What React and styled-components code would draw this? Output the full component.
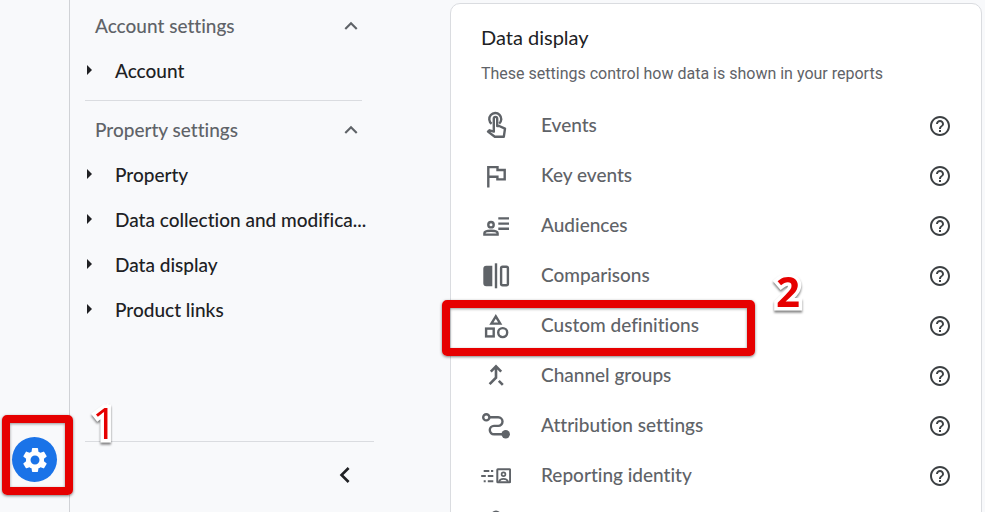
import { useState } from "react";
import styled, { createGlobalStyle } from "styled-components";
import {
  MdSettings,
  MdHelpOutline,
  MdExpandLess,
  MdExpandMore,
  MdArrowRight,
  MdChevronLeft,
} from "react-icons/md";

const SECTIONS = [
  { title: "Account settings", items: ["Account"] },
  {
    title: "Property settings",
    items: [
      "Property",
      "Data collection and modifica...",
      "Data display",
      "Product links",
    ],
  },
];

const SETTINGS = [
  { label: "Events", icon: TapIcon },
  { label: "Key events", icon: FlagIcon },
  { label: "Audiences", icon: AudienceIcon },
  { label: "Comparisons", icon: CompareIcon },
  { label: "Custom definitions", icon: ShapesIcon, step: 2 },
  { label: "Channel groups", icon: MergeIcon },
  { label: "Attribution settings", icon: PathIcon },
  { label: "Reporting identity", icon: IdentityIcon },
];

function Icon({ children }) {
  return (
    <svg
      width="30"
      height="30"
      viewBox="0 0 30 30"
      fill="none"
      stroke="currentColor"
      strokeWidth="2.4"
      aria-hidden="true"
    >
      {children}
    </svg>
  );
}

function TapIcon() {
  return (
    <Icon>
      <path d="M10.6 13.8A6 6 0 1 1 18.2 13.6" />
      <path
        d="M12.8 21.6V8.6a1.7 1.7 0 0 1 3.4 0V16h2l5.8 2.6-1.2 8.2h-9L7 21.6l1.6-1.3z"
        strokeLinejoin="round"
      />
    </Icon>
  );
}

function FlagIcon() {
  return (
    <Icon>
      <path d="M7.3 27.4V7.1h9.2V10h7.2v9.4h-7.3v-2.6H7.3" />
    </Icon>
  );
}

function AudienceIcon() {
  return (
    <Icon>
      <circle cx="10" cy="14.7" r="2.7" />
      <path d="M3.4 24.6v-1.4c0-3.2 13.2-3.2 13.2 0v1.4z" />
      <path d="M17.3 8.4H28M17.3 13.6H28M17.3 18.8H28" />
    </Icon>
  );
}

function CompareIcon() {
  return (
    <Icon>
      <path
        d="M11.3 5.7v20.6h-6a3 3 0 0 1-3-3V8.7a3 3 0 0 1 3-3z"
        fill="currentColor"
        stroke="none"
      />
      <path d="M15 3.3v25" />
      <rect x="20.1" y="6.8" width="6.8" height="18.4" rx="1.5" />
    </Icon>
  );
}

function ShapesIcon() {
  return (
    <Icon>
      <path d="M14.8 6.4l-4.4 7.2h8.8z" />
      <rect x="5.1" y="18.6" width="7.6" height="7.8" />
      <circle cx="21.7" cy="22.6" r="4.5" />
    </Icon>
  );
}

function MergeIcon() {
  return (
    <Icon>
      <path
        d="M9.8 11.6L15 6.4l5.2 5.2M15 7v10.6l-6.4 6.6M17.8 20.8l4 4"
        strokeWidth="2.6"
      />
    </Icon>
  );
}

function PathIcon() {
  return (
    <Icon>
      <circle cx="5.3" cy="7.3" r="3.1" />
      <path d="M8.5 7.3H17.2a4.3 4.3 0 0 1 0 8.6H13a4.2 4.2 0 0 0 0 8.4H23" />
      <circle cx="24.7" cy="24.3" r="4.2" fill="currentColor" stroke="none" />
    </Icon>
  );
}

function IdentityIcon() {
  return (
    <Icon>
      <rect x="16.3" y="9.3" width="12.8" height="13" rx="0.5" strokeWidth="2" />
      <circle cx="22.5" cy="14.2" r="1.9" strokeWidth="1.7" />
      <path d="M18 21.8c1-4 8-4 9 0" strokeWidth="1.8" />
      <path
        d="M2.7 11h5.6M10 11h2.2M.2 16h4.6M6.8 16h5.5M2.7 21.2h2M6.8 21.2h5.5"
        strokeWidth="2"
      />
    </Icon>
  );
}

function PersonIcon() {
  return (
    <Icon>
      <circle cx="15" cy="5.6" r="4" />
    </Icon>
  );
}

function NavSection({ title, items }) {
  const [open, setOpen] = useState(true);
  return (
    <Section>
      <SectionToggle
        type="button"
        aria-expanded={open}
        onClick={() => setOpen(!open)}
      >
        {title}
        {open ? <MdExpandLess size={26} /> : <MdExpandMore size={26} />}
      </SectionToggle>
      {open &&
        items.map((item) => (
          <NavItem key={item} type="button">
            <MdArrowRight size={24} />
            <span>{item}</span>
          </NavItem>
        ))}
    </Section>
  );
}

export default function App() {
  return (
    <>
      <GlobalStyle />
      <Page>
        <Rail>
          <AdminLink href="#admin" aria-label="Admin">
            <MdSettings size={30} />
          </AdminLink>
          <RailMarker />
          <RailNumber>1</RailNumber>
        </Rail>
        <Sidebar>
          <Sections>
            {SECTIONS.map((section) => (
              <NavSection key={section.title} {...section} />
            ))}
          </Sections>
          <SidebarFooter>
            <CollapseButton type="button" aria-label="Collapse">
              <MdChevronLeft size={32} />
            </CollapseButton>
          </SidebarFooter>
        </Sidebar>
        <Main>
          <Card>
            <CardTitle>Data display</CardTitle>
            <CardText>
              These settings control how data is shown in your reports
            </CardText>
            <SettingList>
              {SETTINGS.map(({ label, icon: SettingIcon, step }) => (
                <SettingRow key={label}>
                  <SettingLink href="#setting">
                    <SettingIcon />
                    <SettingLabel>{label}</SettingLabel>
                  </SettingLink>
                  <HelpButton type="button" aria-label={`Help: ${label}`}>
                    <MdHelpOutline size={24} />
                  </HelpButton>
                  {step && (
                    <>
                      <RowMarker />
                      <RowNumber>{step}</RowNumber>
                    </>
                  )}
                </SettingRow>
              ))}
              <SettingRow>
                <PersonIcon />
              </SettingRow>
            </SettingList>
          </Card>
        </Main>
      </Page>
    </>
  );
}

const GlobalStyle = createGlobalStyle`
  * {
    box-sizing: border-box;
  }
  body {
    margin: 0;
    background: #f8f9fb;
    color: #202124;
    font-family: "Lato", "Liberation Sans", sans-serif;
    font-size: 19px;
    font-weight: 500;
    font-variant-ligatures: none;
  }
  button {
    border: 0;
    padding: 0;
    background: none;
    color: inherit;
    font: inherit;
    font-variant-ligatures: none;
    cursor: pointer;
  }
`;

const Page = styled.div`
  display: flex;
  height: 100vh;
  overflow: hidden;
`;

const Rail = styled.div`
  position: relative;
  flex: none;
  display: flex;
  flex-direction: column;
  justify-content: flex-end;
  width: 70px;
  padding: 0 12px 30px;
  border-right: 1px solid #d0d2d6;
`;

const AdminLink = styled.a`
  display: flex;
  align-items: center;
  justify-content: center;
  width: 45px;
  height: 45px;
  border-radius: 50%;
  background: #1a73e8;
  color: #fff;
`;

const Marker = styled.div`
  position: absolute;
  z-index: 1;
  border: 8px solid #e60000;
  border-radius: 5px;
  box-shadow: 0 1px 3px rgba(0, 0, 0, 0.5),
    inset 0 1px 3px rgba(0, 0, 0, 0.4);
  pointer-events: none;
`;

const RailMarker = styled(Marker)`
  left: 2px;
  bottom: 17px;
  width: 71px;
  height: 80px;
`;

const RowMarker = styled(Marker)`
  left: -39px;
  top: 0;
  width: 313px;
  height: 56px;
`;

const StepNumber = styled.span`
  position: absolute;
  z-index: 1;
  color: #e60000;
  font-family: "Open Sans", sans-serif;
  line-height: 48px;
  -webkit-text-stroke: 7px #fff;
  paint-order: stroke fill;
  filter: drop-shadow(0 2px 1px rgba(0, 0, 0, 0.5));
`;

const RailNumber = styled(StepNumber)`
  left: 92px;
  bottom: 66px;
  font-size: 44px;
  font-weight: 500;
`;

const RowNumber = styled(StepNumber)`
  left: 295px;
  top: -33px;
  font-size: 42px;
  font-weight: 700;
`;

const Sidebar = styled.nav`
  flex: none;
  display: flex;
  flex-direction: column;
  width: 304px;
  padding-left: 15px;
`;

const Sections = styled.div`
  flex: 1;
  padding: 3px 8px 0 0;
`;

const Section = styled.div`
  & + & {
    position: relative;
    margin-top: 7px;
    padding-top: 7px;
  }
  & + &::before {
    content: "";
    position: absolute;
    top: 0;
    left: 0;
    right: 4px;
    border-top: 1px solid #dadce0;
  }
`;

const SectionToggle = styled.button`
  && {
    display: flex;
    align-items: center;
    justify-content: space-between;
    width: 100%;
    height: 45px;
    padding: 0 2px 0 10px;
    color: #5f6368;
  }
`;

const NavItem = styled.button`
  display: flex;
  align-items: center;
  gap: 14px;
  width: 100%;
  height: 45px;
  white-space: nowrap;
  svg {
    flex: none;
    margin: 0 0 2px -8px;
  }
`;

const SidebarFooter = styled.div`
  display: flex;
  justify-content: flex-end;
  align-items: center;
  height: 71px;
  padding: 0 13px 4px 0;
  border-top: 1px solid #dadce0;
`;

const CollapseButton = styled.button`
  display: flex;
`;

const Main = styled.main`
  flex: 1;
  min-width: 0;
  padding: 3px 3px 0 76px;
`;

const Card = styled.section`
  padding: 19px 30px 0;
  background: #fff;
  border: 1px solid #dadce0;
  border-radius: 10px;
`;

const CardTitle = styled.h1`
  margin: 0;
  font-size: 20px;
  font-weight: 400;
  line-height: 28px;
`;

const CardText = styled.p`
  margin: 13px 0 16px;
  color: #5f6368;
  font-family: "Roboto", sans-serif;
  font-size: 16px;
  font-weight: 400;
  line-height: 20px;
`;

const SettingList = styled.ul`
  margin: 0;
  padding: 0;
  list-style: none;
`;

const SettingRow = styled.li`
  position: relative;
  display: flex;
  align-items: center;
  height: 50px;
  color: #5f6368;
`;

const SettingLink = styled.a`
  flex: 1;
  display: flex;
  align-items: center;
  gap: 30px;
  color: inherit;
  text-decoration: none;
`;

const SettingLabel = styled.span`
  padding-bottom: 2px;
`;

const HelpButton = styled.button`
  && {
    display: flex;
    margin-right: -1px;
    padding-top: 2px;
    color: #3c4043;
  }
`;
